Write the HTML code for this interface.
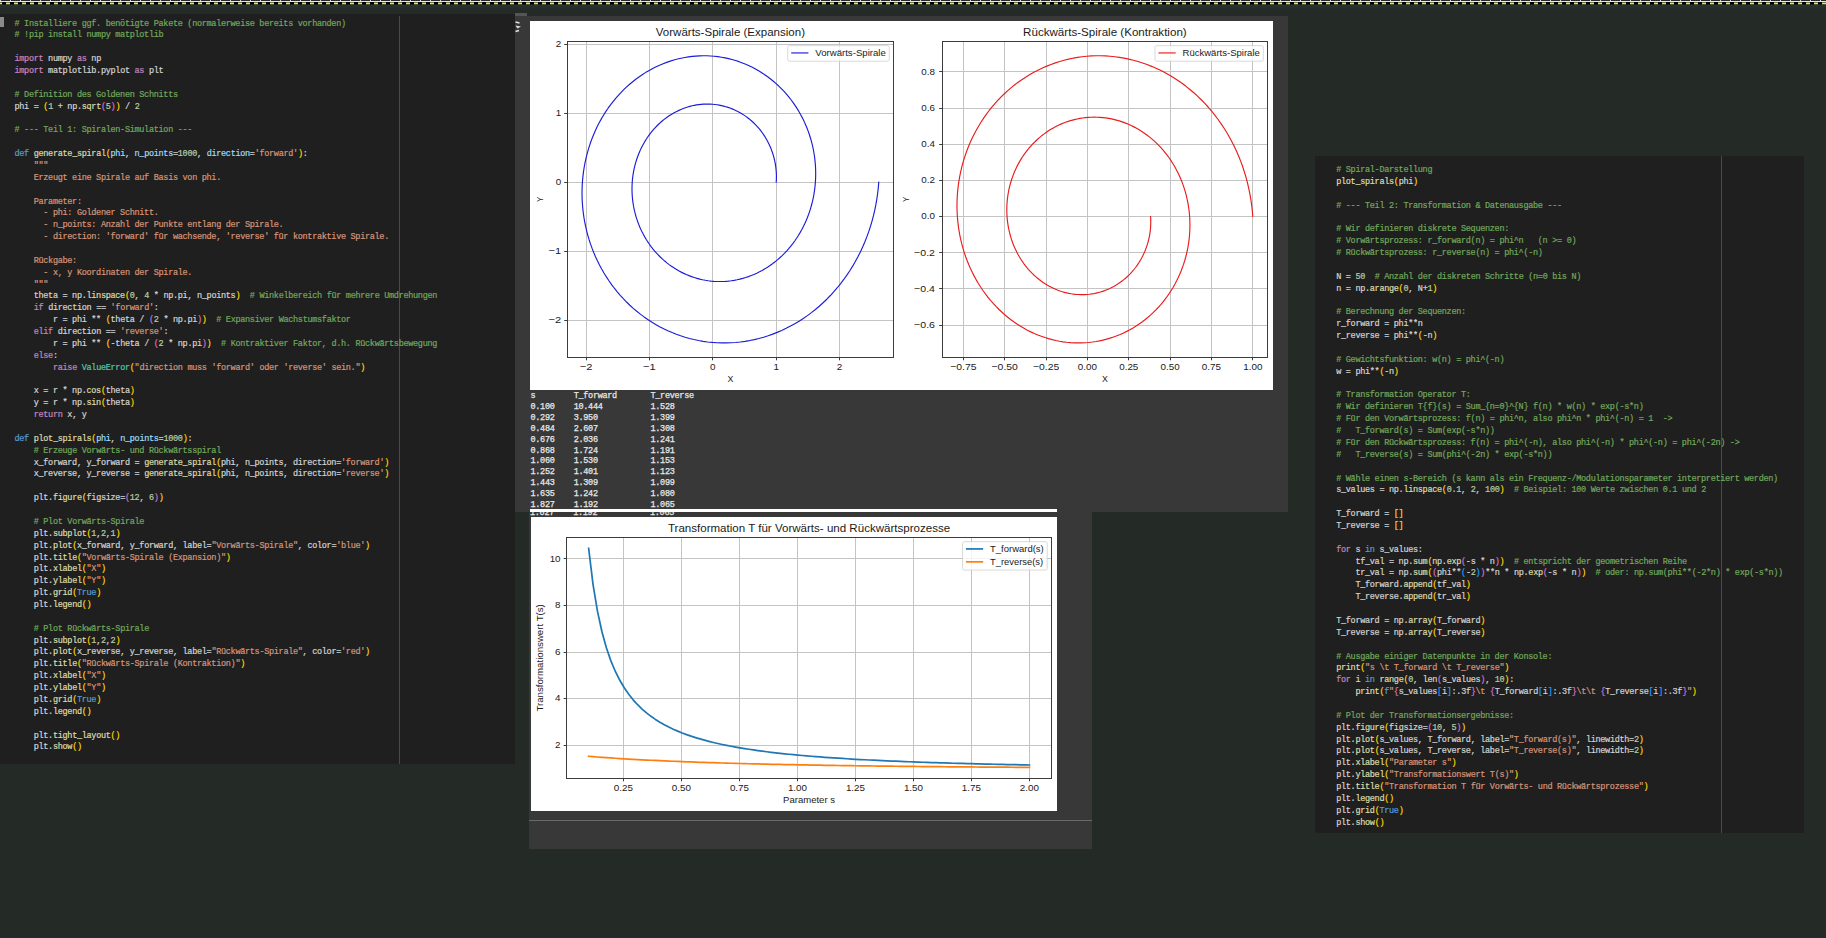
<!DOCTYPE html>
<html><head><meta charset="utf-8"><title>notebook</title><style>
*{margin:0;padding:0;box-sizing:border-box}
html,body{width:1826px;height:938px;overflow:hidden;background:#242a26}
body{position:relative;font-family:"Liberation Sans",sans-serif}
.abs{position:absolute}
.cl{position:absolute;white-space:pre;font:8.5px/12px "Liberation Mono",monospace;letter-spacing:-0.3px;color:#d4d4d4;-webkit-text-stroke:0.2px}
.tb{position:absolute;left:530.5px;white-space:pre;font:8.5px/11px "Liberation Mono",monospace;letter-spacing:-0.3px;color:#e8e8e8;-webkit-text-stroke:0.25px}
</style></head>
<body>
<svg class="abs" style="left:0;top:0" width="1826" height="6">
<defs>
<pattern id="pw" width="10" height="1" patternUnits="userSpaceOnUse"><rect width="10" height="1" fill="#2a2a30"/><rect x="0" width="1" height="1" fill="#d8d8d8"/></pattern>
<pattern id="py" width="8" height="2" patternUnits="userSpaceOnUse"><rect width="8" height="2" fill="#000"/><rect x="0" width="2" height="2" fill="#d2e676"/><rect x="6" width="2" height="2" fill="#d2e676"/></pattern>
</defs>
<rect x="0" y="0" width="1826" height="1" fill="url(#pw)"/>
<rect x="0" y="1" width="1826" height="1" fill="#e8e8e8"/>
<rect x="0" y="2" width="1826" height="1" fill="#0a0a0a"/>
<rect x="0" y="2.5" width="1826" height="2" fill="url(#py)"/>
<rect x="0" y="4.5" width="1826" height="1.5" fill="#1e2419"/>
</svg>
<div class="abs" style="left:0;top:5px;width:1826px;height:6px;background:linear-gradient(#2b3031 0px,#272c2c 3px,#242a26 6px)"></div>
<div class="abs" style="left:0;top:14px;width:515px;height:750px;background:#1f1f1f"></div>
<div class="abs" style="left:399px;top:16px;width:1px;height:748px;background:#4a4a4a"></div>
<div class="abs" style="left:0;top:17px;width:4px;height:10px;background:#8a8a8a"></div>
<div class="cl" style="left:14.5px;top:17.50px"><span style="color:#72a85c"># Installiere ggf. benötigte Pakete (normalerweise bereits vorhanden)</span></div>
<div class="cl" style="left:14.5px;top:29.37px"><span style="color:#72a85c"># !pip install numpy matplotlib</span></div>
<div class="cl" style="left:14.5px;top:53.10px"><span style="color:#c586c0">import</span> numpy <span style="color:#c586c0">as</span> np</div>
<div class="cl" style="left:14.5px;top:64.97px"><span style="color:#c586c0">import</span> matplotlib.pyplot <span style="color:#c586c0">as</span> plt</div>
<div class="cl" style="left:14.5px;top:88.70px"><span style="color:#72a85c"># Definition des Goldenen Schnitts</span></div>
<div class="cl" style="left:14.5px;top:100.57px">phi = <span style="color:#ffd700">(</span><span style="color:#b5cea8">1</span> + np.<span style="color:#dcdcaa">sqrt</span><span style="color:#da70d6">(</span><span style="color:#b5cea8">5</span><span style="color:#da70d6">)</span><span style="color:#ffd700">)</span> / <span style="color:#b5cea8">2</span></div>
<div class="cl" style="left:14.5px;top:124.30px"><span style="color:#72a85c"># --- Teil 1: Spiralen-Simulation ---</span></div>
<div class="cl" style="left:14.5px;top:148.04px"><span style="color:#569cd6">def</span> <span style="color:#dcdcaa">generate_spiral</span><span style="color:#ffd700">(</span><span style="color:#9cdcfe">phi</span>, <span style="color:#9cdcfe">n_points</span>=<span style="color:#b5cea8">1000</span>, <span style="color:#9cdcfe">direction</span>=<span style="color:#d6957a">'forward'</span><span style="color:#ffd700">)</span>:</div>
<div class="cl" style="left:14.5px;top:159.90px">    <span style="color:#d6957a">"""</span></div>
<div class="cl" style="left:14.5px;top:171.77px"><span style="color:#d6957a">    Erzeugt eine Spirale auf Basis von phi.</span></div>
<div class="cl" style="left:14.5px;top:195.51px"><span style="color:#d6957a">    Parameter:</span></div>
<div class="cl" style="left:14.5px;top:207.37px"><span style="color:#d6957a">      - phi: Goldener Schnitt.</span></div>
<div class="cl" style="left:14.5px;top:219.24px"><span style="color:#d6957a">      - n_points: Anzahl der Punkte entlang der Spirale.</span></div>
<div class="cl" style="left:14.5px;top:231.11px"><span style="color:#d6957a">      - direction: 'forward' für wachsende, 'reverse' für kontraktive Spirale.</span></div>
<div class="cl" style="left:14.5px;top:254.84px"><span style="color:#d6957a">    Rückgabe:</span></div>
<div class="cl" style="left:14.5px;top:266.71px"><span style="color:#d6957a">      - x, y Koordinaten der Spirale.</span></div>
<div class="cl" style="left:14.5px;top:278.57px"><span style="color:#d6957a">    """</span></div>
<div class="cl" style="left:14.5px;top:290.44px">    theta = np.<span style="color:#dcdcaa">linspace</span><span style="color:#ffd700">(</span><span style="color:#b5cea8">0</span>, <span style="color:#b5cea8">4</span> * np.pi, n_points<span style="color:#ffd700">)</span>  <span style="color:#72a85c"># Winkelbereich für mehrere Umdrehungen</span></div>
<div class="cl" style="left:14.5px;top:302.31px">    <span style="color:#c586c0">if</span> direction == <span style="color:#d6957a">'forward'</span>:</div>
<div class="cl" style="left:14.5px;top:314.18px">        r = phi ** <span style="color:#ffd700">(</span>theta / <span style="color:#da70d6">(</span><span style="color:#b5cea8">2</span> * np.pi<span style="color:#da70d6">)</span><span style="color:#ffd700">)</span>  <span style="color:#72a85c"># Expansiver Wachstumsfaktor</span></div>
<div class="cl" style="left:14.5px;top:326.04px">    <span style="color:#c586c0">elif</span> direction == <span style="color:#d6957a">'reverse'</span>:</div>
<div class="cl" style="left:14.5px;top:337.91px">        r = phi ** <span style="color:#ffd700">(</span>-theta / <span style="color:#da70d6">(</span><span style="color:#b5cea8">2</span> * np.pi<span style="color:#da70d6">)</span><span style="color:#ffd700">)</span>  <span style="color:#72a85c"># Kontraktiver Faktor, d.h. Rückwärtsbewegung</span></div>
<div class="cl" style="left:14.5px;top:349.78px">    <span style="color:#c586c0">else</span>:</div>
<div class="cl" style="left:14.5px;top:361.64px">        <span style="color:#c586c0">raise</span> <span style="color:#4ec9b0">ValueError</span><span style="color:#ffd700">(</span><span style="color:#d6957a">"direction muss 'forward' oder 'reverse' sein."</span><span style="color:#ffd700">)</span></div>
<div class="cl" style="left:14.5px;top:385.38px">    x = r * np.<span style="color:#dcdcaa">cos</span><span style="color:#ffd700">(</span>theta<span style="color:#ffd700">)</span></div>
<div class="cl" style="left:14.5px;top:397.24px">    y = r * np.<span style="color:#dcdcaa">sin</span><span style="color:#ffd700">(</span>theta<span style="color:#ffd700">)</span></div>
<div class="cl" style="left:14.5px;top:409.11px">    <span style="color:#c586c0">return</span> x, y</div>
<div class="cl" style="left:14.5px;top:432.85px"><span style="color:#569cd6">def</span> <span style="color:#dcdcaa">plot_spirals</span><span style="color:#ffd700">(</span><span style="color:#9cdcfe">phi</span>, <span style="color:#9cdcfe">n_points</span>=<span style="color:#b5cea8">1000</span><span style="color:#ffd700">)</span>:</div>
<div class="cl" style="left:14.5px;top:444.71px">    <span style="color:#72a85c"># Erzeuge Vorwärts- und Rückwärtsspiral</span></div>
<div class="cl" style="left:14.5px;top:456.58px">    x_forward, y_forward = <span style="color:#dcdcaa">generate_spiral</span><span style="color:#ffd700">(</span>phi, n_points, direction=<span style="color:#d6957a">'forward'</span><span style="color:#ffd700">)</span></div>
<div class="cl" style="left:14.5px;top:468.45px">    x_reverse, y_reverse = <span style="color:#dcdcaa">generate_spiral</span><span style="color:#ffd700">(</span>phi, n_points, direction=<span style="color:#d6957a">'reverse'</span><span style="color:#ffd700">)</span></div>
<div class="cl" style="left:14.5px;top:492.18px">    plt.<span style="color:#dcdcaa">figure</span><span style="color:#ffd700">(</span>figsize=<span style="color:#da70d6">(</span><span style="color:#b5cea8">12</span>, <span style="color:#b5cea8">6</span><span style="color:#da70d6">)</span><span style="color:#ffd700">)</span></div>
<div class="cl" style="left:14.5px;top:515.91px">    <span style="color:#72a85c"># Plot Vorwärts-Spirale</span></div>
<div class="cl" style="left:14.5px;top:527.78px">    plt.<span style="color:#dcdcaa">subplot</span><span style="color:#ffd700">(</span><span style="color:#b5cea8">1</span>,<span style="color:#b5cea8">2</span>,<span style="color:#b5cea8">1</span><span style="color:#ffd700">)</span></div>
<div class="cl" style="left:14.5px;top:539.65px">    plt.<span style="color:#dcdcaa">plot</span><span style="color:#ffd700">(</span>x_forward, y_forward, label=<span style="color:#d6957a">"Vorwärts-Spirale"</span>, color=<span style="color:#d6957a">'blue'</span><span style="color:#ffd700">)</span></div>
<div class="cl" style="left:14.5px;top:551.51px">    plt.<span style="color:#dcdcaa">title</span><span style="color:#ffd700">(</span><span style="color:#d6957a">"Vorwärts-Spirale (Expansion)"</span><span style="color:#ffd700">)</span></div>
<div class="cl" style="left:14.5px;top:563.38px">    plt.<span style="color:#dcdcaa">xlabel</span><span style="color:#ffd700">(</span><span style="color:#d6957a">"X"</span><span style="color:#ffd700">)</span></div>
<div class="cl" style="left:14.5px;top:575.25px">    plt.<span style="color:#dcdcaa">ylabel</span><span style="color:#ffd700">(</span><span style="color:#d6957a">"Y"</span><span style="color:#ffd700">)</span></div>
<div class="cl" style="left:14.5px;top:587.12px">    plt.<span style="color:#dcdcaa">grid</span><span style="color:#ffd700">(</span><span style="color:#569cd6">True</span><span style="color:#ffd700">)</span></div>
<div class="cl" style="left:14.5px;top:598.98px">    plt.<span style="color:#dcdcaa">legend</span><span style="color:#ffd700">()</span></div>
<div class="cl" style="left:14.5px;top:622.72px">    <span style="color:#72a85c"># Plot Rückwärts-Spirale</span></div>
<div class="cl" style="left:14.5px;top:634.58px">    plt.<span style="color:#dcdcaa">subplot</span><span style="color:#ffd700">(</span><span style="color:#b5cea8">1</span>,<span style="color:#b5cea8">2</span>,<span style="color:#b5cea8">2</span><span style="color:#ffd700">)</span></div>
<div class="cl" style="left:14.5px;top:646.45px">    plt.<span style="color:#dcdcaa">plot</span><span style="color:#ffd700">(</span>x_reverse, y_reverse, label=<span style="color:#d6957a">"Rückwärts-Spirale"</span>, color=<span style="color:#d6957a">'red'</span><span style="color:#ffd700">)</span></div>
<div class="cl" style="left:14.5px;top:658.32px">    plt.<span style="color:#dcdcaa">title</span><span style="color:#ffd700">(</span><span style="color:#d6957a">"Rückwärts-Spirale (Kontraktion)"</span><span style="color:#ffd700">)</span></div>
<div class="cl" style="left:14.5px;top:670.19px">    plt.<span style="color:#dcdcaa">xlabel</span><span style="color:#ffd700">(</span><span style="color:#d6957a">"X"</span><span style="color:#ffd700">)</span></div>
<div class="cl" style="left:14.5px;top:682.05px">    plt.<span style="color:#dcdcaa">ylabel</span><span style="color:#ffd700">(</span><span style="color:#d6957a">"Y"</span><span style="color:#ffd700">)</span></div>
<div class="cl" style="left:14.5px;top:693.92px">    plt.<span style="color:#dcdcaa">grid</span><span style="color:#ffd700">(</span><span style="color:#569cd6">True</span><span style="color:#ffd700">)</span></div>
<div class="cl" style="left:14.5px;top:705.79px">    plt.<span style="color:#dcdcaa">legend</span><span style="color:#ffd700">()</span></div>
<div class="cl" style="left:14.5px;top:729.52px">    plt.<span style="color:#dcdcaa">tight_layout</span><span style="color:#ffd700">()</span></div>
<div class="cl" style="left:14.5px;top:741.39px">    plt.<span style="color:#dcdcaa">show</span><span style="color:#ffd700">()</span></div>

<div class="abs" style="left:515px;top:16px;width:773px;height:496px;background:#383838"></div>
<div class="abs" style="left:515px;top:13px;width:12px;height:3px;background:#555"></div>
<svg class="abs" style="left:514px;top:20px" width="10" height="14"><path d="M1.5 2 L5.5 3" stroke="#e0e0e0" stroke-width="1.6" fill="none"/><path d="M1.5 5.5 L7 6.5 L3.5 8.5 Z" fill="#e0e0e0"/><path d="M1.5 11.5 L5 10.5" stroke="#e0e0e0" stroke-width="1.6" fill="none"/></svg>
<svg style="position:absolute;left:530px;top:21px" width="743" height="369" viewBox="530 21 743 369" font-family='"Liberation Sans", sans-serif'><rect x="530" y="21" width="743" height="369" fill="#fff"/><line x1="586.50" y1="41.40" x2="586.50" y2="357.30" stroke="#c4c4c4" stroke-width="1"/>
<line x1="649.50" y1="41.40" x2="649.50" y2="357.30" stroke="#c4c4c4" stroke-width="1"/>
<line x1="712.50" y1="41.40" x2="712.50" y2="357.30" stroke="#c4c4c4" stroke-width="1"/>
<line x1="776.50" y1="41.40" x2="776.50" y2="357.30" stroke="#c4c4c4" stroke-width="1"/>
<line x1="839.50" y1="41.40" x2="839.50" y2="357.30" stroke="#c4c4c4" stroke-width="1"/>
<line x1="567.20" y1="320.50" x2="893.60" y2="320.50" stroke="#c4c4c4" stroke-width="1"/>
<line x1="567.20" y1="251.50" x2="893.60" y2="251.50" stroke="#c4c4c4" stroke-width="1"/>
<line x1="567.20" y1="182.50" x2="893.60" y2="182.50" stroke="#c4c4c4" stroke-width="1"/>
<line x1="567.20" y1="113.50" x2="893.60" y2="113.50" stroke="#c4c4c4" stroke-width="1"/>
<line x1="567.20" y1="44.50" x2="893.60" y2="44.50" stroke="#c4c4c4" stroke-width="1"/>
<path d="M776.22,182.16 L776.34,179.98 L776.40,177.80 L776.40,175.60 L776.33,173.40 L776.20,171.20 L776.00,169.00 L775.74,166.80 L775.42,164.61 L775.03,162.42 L774.58,160.25 L774.06,158.08 L773.48,155.93 L772.84,153.79 L772.13,151.68 L771.36,149.58 L770.53,147.50 L769.63,145.45 L768.68,143.43 L767.67,141.43 L766.59,139.47 L765.46,137.54 L764.27,135.64 L763.02,133.79 L761.71,131.97 L760.35,130.19 L758.94,128.46 L757.47,126.77 L755.95,125.13 L754.38,123.53 L752.76,121.99 L751.10,120.50 L749.38,119.07 L747.63,117.69 L745.83,116.37 L743.98,115.11 L742.10,113.91 L740.18,112.77 L738.22,111.70 L736.23,110.69 L734.21,109.75 L732.15,108.88 L730.06,108.07 L727.95,107.34 L725.81,106.68 L723.65,106.08 L721.47,105.57 L719.27,105.12 L717.05,104.76 L714.81,104.46 L712.57,104.25 L710.31,104.11 L708.04,104.04 L705.77,104.06 L703.50,104.15 L701.22,104.32 L698.94,104.58 L696.67,104.91 L694.40,105.31 L692.14,105.80 L689.89,106.37 L687.65,107.01 L685.42,107.73 L683.21,108.53 L681.02,109.41 L678.85,110.37 L676.71,111.40 L674.59,112.51 L672.50,113.69 L670.44,114.95 L668.41,116.28 L666.42,117.68 L664.46,119.15 L662.54,120.70 L660.67,122.31 L658.83,123.99 L657.04,125.74 L655.30,127.55 L653.61,129.42 L651.97,131.36 L650.38,133.36 L648.85,135.41 L647.37,137.52 L645.95,139.69 L644.59,141.91 L643.30,144.18 L642.06,146.50 L640.89,148.87 L639.79,151.28 L638.76,153.73 L637.79,156.23 L636.90,158.76 L636.07,161.33 L635.32,163.93 L634.64,166.56 L634.04,169.22 L633.52,171.91 L633.07,174.61 L632.70,177.34 L632.40,180.09 L632.19,182.86 L632.05,185.63 L632.00,188.42 L632.02,191.21 L632.13,194.01 L632.32,196.81 L632.59,199.61 L632.94,202.40 L633.37,205.19 L633.89,207.97 L634.48,210.73 L635.16,213.48 L635.92,216.22 L636.76,218.93 L637.68,221.62 L638.68,224.28 L639.75,226.91 L640.91,229.51 L642.14,232.08 L643.45,234.60 L644.84,237.09 L646.30,239.54 L647.83,241.94 L649.44,244.29 L651.12,246.59 L652.86,248.83 L654.68,251.03 L656.56,253.16 L658.51,255.23 L660.52,257.24 L662.60,259.18 L664.73,261.06 L666.93,262.87 L669.17,264.60 L671.48,266.26 L673.84,267.85 L676.24,269.35 L678.70,270.78 L681.20,272.12 L683.74,273.38 L686.33,274.56 L688.96,275.65 L691.62,276.65 L694.31,277.56 L697.04,278.38 L699.80,279.11 L702.58,279.75 L705.39,280.29 L708.21,280.73 L711.06,281.08 L713.92,281.33 L716.80,281.48 L719.68,281.54 L722.57,281.49 L725.47,281.35 L728.37,281.11 L731.26,280.76 L734.15,280.32 L737.04,279.77 L739.91,279.13 L742.77,278.38 L745.61,277.54 L748.44,276.60 L751.24,275.55 L754.02,274.41 L756.77,273.17 L759.49,271.83 L762.18,270.40 L764.83,268.87 L767.44,267.25 L770.01,265.54 L772.53,263.73 L775.01,261.83 L777.44,259.85 L779.81,257.78 L782.13,255.62 L784.39,253.37 L786.59,251.05 L788.73,248.64 L790.80,246.16 L792.80,243.60 L794.73,240.97 L796.59,238.27 L798.38,235.49 L800.09,232.65 L801.72,229.75 L803.27,226.78 L804.73,223.76 L806.11,220.68 L807.41,217.54 L808.61,214.36 L809.73,211.12 L810.75,207.85 L811.69,204.53 L812.52,201.17 L813.27,197.78 L813.91,194.35 L814.46,190.90 L814.90,187.42 L815.25,183.92 L815.50,180.40 L815.65,176.87 L815.69,173.32 L815.63,169.77 L815.47,166.21 L815.20,162.65 L814.83,159.09 L814.36,155.53 L813.79,151.99 L813.10,148.46 L812.32,144.95 L811.43,141.45 L810.44,137.98 L809.35,134.54 L808.16,131.13 L806.86,127.76 L805.47,124.42 L803.97,121.12 L802.38,117.87 L800.69,114.66 L798.90,111.51 L797.02,108.42 L795.04,105.38 L792.98,102.41 L790.82,99.50 L788.58,96.66 L786.25,93.89 L783.83,91.19 L781.33,88.58 L778.75,86.04 L776.09,83.59 L773.36,81.22 L770.55,78.95 L767.67,76.77 L764.73,74.68 L761.71,72.69 L758.63,70.80 L755.50,69.01 L752.30,67.32 L749.05,65.75 L745.75,64.28 L742.40,62.92 L739.00,61.67 L735.56,60.54 L732.08,59.53 L728.57,58.63 L725.02,57.85 L721.44,57.20 L717.84,56.66 L714.21,56.25 L710.57,55.96 L706.91,55.80 L703.24,55.76 L699.56,55.85 L695.87,56.06 L692.19,56.40 L688.51,56.87 L684.83,57.47 L681.16,58.20 L677.51,59.05 L673.88,60.03 L670.27,61.13 L666.68,62.37 L663.12,63.72 L659.60,65.21 L656.11,66.82 L652.66,68.55 L649.25,70.40 L645.89,72.37 L642.58,74.47 L639.33,76.68 L636.13,79.00 L633.00,81.44 L629.93,84.00 L626.92,86.66 L623.99,89.43 L621.14,92.31 L618.36,95.30 L615.66,98.38 L613.05,101.56 L610.52,104.84 L608.09,108.21 L605.74,111.67 L603.50,115.22 L601.35,118.86 L599.30,122.57 L597.36,126.36 L595.52,130.23 L593.79,134.17 L592.17,138.17 L590.67,142.24 L589.27,146.36 L588.00,150.55 L586.85,154.78 L585.81,159.06 L584.90,163.39 L584.11,167.75 L583.44,172.15 L582.91,176.59 L582.49,181.05 L582.21,185.53 L582.06,190.03 L582.04,194.54 L582.14,199.07 L582.38,203.59 L582.75,208.12 L583.26,212.65 L583.89,217.17 L584.66,221.67 L585.56,226.15 L586.59,230.62 L587.75,235.05 L589.04,239.46 L590.46,243.83 L592.01,248.16 L593.69,252.44 L595.50,256.67 L597.43,260.85 L599.49,264.97 L601.67,269.03 L603.97,273.02 L606.40,276.94 L608.94,280.79 L611.59,284.55 L614.37,288.23 L617.25,291.82 L620.24,295.32 L623.34,298.72 L626.55,302.03 L629.85,305.23 L633.26,308.32 L636.76,311.30 L640.35,314.16 L644.04,316.91 L647.81,319.53 L651.66,322.03 L655.60,324.41 L659.61,326.65 L663.69,328.76 L667.84,330.73 L672.06,332.56 L676.34,334.26 L680.67,335.80 L685.06,337.21 L689.50,338.46 L693.98,339.56 L698.50,340.51 L703.06,341.31 L707.65,341.95 L712.27,342.44 L716.91,342.76 L721.57,342.93 L726.24,342.94 L730.92,342.79 L735.61,342.47 L740.30,342.00 L744.98,341.36 L749.65,340.56 L754.31,339.60 L758.95,338.47 L763.57,337.19 L768.15,335.74 L772.71,334.13 L777.23,332.36 L781.70,330.44 L786.13,328.35 L790.50,326.11 L794.82,323.72 L799.08,321.17 L803.27,318.47 L807.39,315.62 L811.44,312.62 L815.40,309.48 L819.29,306.20 L823.08,302.78 L826.79,299.22 L830.40,295.52 L833.91,291.69 L837.31,287.74 L840.61,283.66 L843.79,279.46 L846.86,275.14 L849.81,270.71 L852.64,266.17 L855.34,261.52 L857.91,256.77 L860.35,251.92 L862.66,246.98 L864.82,241.95 L866.84,236.84 L868.72,231.65 L870.45,226.38 L872.04,221.04 L873.47,215.64 L874.75,210.18 L875.87,204.66 L876.83,199.10 L877.64,193.49 L878.28,187.84 L878.76,182.16" fill="none" stroke="#1c1cd8" stroke-width="1.15" stroke-linejoin="round" stroke-linecap="square"/>
<rect x="567.50" y="41.50" width="326.00" height="316.00" fill="none" stroke="#3c3c3c" stroke-width="1"/>
<line x1="586.50" y1="357.30" x2="586.50" y2="360.30" stroke="#3c3c3c" stroke-width="1"/>
<text x="586.10" y="369.60" font-size="9.40" text-anchor="middle" textLength="12.68" lengthAdjust="spacingAndGlyphs" fill="#1a1a1a">−2</text>
<line x1="649.50" y1="357.30" x2="649.50" y2="360.30" stroke="#3c3c3c" stroke-width="1"/>
<text x="649.47" y="369.60" font-size="9.40" text-anchor="middle" textLength="12.68" lengthAdjust="spacingAndGlyphs" fill="#1a1a1a">−1</text>
<line x1="712.50" y1="357.30" x2="712.50" y2="360.30" stroke="#3c3c3c" stroke-width="1"/>
<text x="712.85" y="369.60" font-size="9.40" text-anchor="middle" textLength="5.47" lengthAdjust="spacingAndGlyphs" fill="#1a1a1a">0</text>
<line x1="776.50" y1="357.30" x2="776.50" y2="360.30" stroke="#3c3c3c" stroke-width="1"/>
<text x="776.22" y="369.60" font-size="9.40" text-anchor="middle" textLength="5.47" lengthAdjust="spacingAndGlyphs" fill="#1a1a1a">1</text>
<line x1="839.50" y1="357.30" x2="839.50" y2="360.30" stroke="#3c3c3c" stroke-width="1"/>
<text x="839.60" y="369.60" font-size="9.40" text-anchor="middle" textLength="5.47" lengthAdjust="spacingAndGlyphs" fill="#1a1a1a">2</text>
<line x1="564.20" y1="320.50" x2="567.20" y2="320.50" stroke="#3c3c3c" stroke-width="1"/>
<text x="561.20" y="323.10" font-size="9.40" text-anchor="end" textLength="12.68" lengthAdjust="spacingAndGlyphs" fill="#1a1a1a">−2</text>
<line x1="564.20" y1="251.50" x2="567.20" y2="251.50" stroke="#3c3c3c" stroke-width="1"/>
<text x="561.20" y="254.03" font-size="9.40" text-anchor="end" textLength="12.68" lengthAdjust="spacingAndGlyphs" fill="#1a1a1a">−1</text>
<line x1="564.20" y1="182.50" x2="567.20" y2="182.50" stroke="#3c3c3c" stroke-width="1"/>
<text x="561.20" y="184.96" font-size="9.40" text-anchor="end" textLength="5.47" lengthAdjust="spacingAndGlyphs" fill="#1a1a1a">0</text>
<line x1="564.20" y1="113.50" x2="567.20" y2="113.50" stroke="#3c3c3c" stroke-width="1"/>
<text x="561.20" y="115.90" font-size="9.40" text-anchor="end" textLength="5.47" lengthAdjust="spacingAndGlyphs" fill="#1a1a1a">1</text>
<line x1="564.20" y1="44.50" x2="567.20" y2="44.50" stroke="#3c3c3c" stroke-width="1"/>
<text x="561.20" y="46.83" font-size="9.40" text-anchor="end" textLength="5.47" lengthAdjust="spacingAndGlyphs" fill="#1a1a1a">2</text>
<text x="730.40" y="36.10" font-size="10.32" text-anchor="middle" textLength="149.20" lengthAdjust="spacingAndGlyphs" fill="#1a1a1a">Vorwärts-Spirale (Expansion)</text>
<text x="730.40" y="382.30" font-size="8.60" text-anchor="middle" textLength="5.89" lengthAdjust="spacingAndGlyphs" fill="#1a1a1a">X</text>
<text x="543.00" y="199.35" font-size="8.60" text-anchor="middle" textLength="5.25" lengthAdjust="spacingAndGlyphs" fill="#1a1a1a" transform="rotate(-90 543.00 199.35)">Y</text>
<rect x="787.74" y="45.70" width="101.56" height="15.48" rx="1.7" fill="#fff" fill-opacity="0.8" stroke="#cccccc" stroke-width="0.75"/>
<line x1="791.18" y1="52.94" x2="808.38" y2="52.94" stroke="#1c1cd8" stroke-width="1.15"/>
<text x="815.26" y="56.04" font-size="8.60" text-anchor="start" textLength="70.60" lengthAdjust="spacingAndGlyphs" fill="#1a1a1a">Vorwärts-Spirale</text><line x1="963.50" y1="41.40" x2="963.50" y2="357.30" stroke="#c4c4c4" stroke-width="1"/>
<line x1="1004.50" y1="41.40" x2="1004.50" y2="357.30" stroke="#c4c4c4" stroke-width="1"/>
<line x1="1046.50" y1="41.40" x2="1046.50" y2="357.30" stroke="#c4c4c4" stroke-width="1"/>
<line x1="1087.50" y1="41.40" x2="1087.50" y2="357.30" stroke="#c4c4c4" stroke-width="1"/>
<line x1="1128.50" y1="41.40" x2="1128.50" y2="357.30" stroke="#c4c4c4" stroke-width="1"/>
<line x1="1170.50" y1="41.40" x2="1170.50" y2="357.30" stroke="#c4c4c4" stroke-width="1"/>
<line x1="1211.50" y1="41.40" x2="1211.50" y2="357.30" stroke="#c4c4c4" stroke-width="1"/>
<line x1="1252.50" y1="41.40" x2="1252.50" y2="357.30" stroke="#c4c4c4" stroke-width="1"/>
<line x1="942.20" y1="325.50" x2="1267.60" y2="325.50" stroke="#c4c4c4" stroke-width="1"/>
<line x1="942.20" y1="288.50" x2="1267.60" y2="288.50" stroke="#c4c4c4" stroke-width="1"/>
<line x1="942.20" y1="252.50" x2="1267.60" y2="252.50" stroke="#c4c4c4" stroke-width="1"/>
<line x1="942.20" y1="216.50" x2="1267.60" y2="216.50" stroke="#c4c4c4" stroke-width="1"/>
<line x1="942.20" y1="180.50" x2="1267.60" y2="180.50" stroke="#c4c4c4" stroke-width="1"/>
<line x1="942.20" y1="144.50" x2="1267.60" y2="144.50" stroke="#c4c4c4" stroke-width="1"/>
<line x1="942.20" y1="108.50" x2="1267.60" y2="108.50" stroke="#c4c4c4" stroke-width="1"/>
<line x1="942.20" y1="71.50" x2="1267.60" y2="71.50" stroke="#c4c4c4" stroke-width="1"/>
<path d="M1252.81,216.54 L1252.33,210.86 L1251.69,205.21 L1250.88,199.60 L1249.92,194.04 L1248.80,188.52 L1247.53,183.06 L1246.10,177.66 L1244.53,172.32 L1242.80,167.05 L1240.93,161.86 L1238.91,156.75 L1236.75,151.72 L1234.45,146.78 L1232.02,141.93 L1229.46,137.18 L1226.77,132.53 L1223.95,127.99 L1221.01,123.56 L1217.95,119.24 L1214.77,115.04 L1211.48,110.96 L1208.09,107.01 L1204.59,103.18 L1200.99,99.48 L1197.30,95.92 L1193.52,92.50 L1189.64,89.22 L1185.69,86.08 L1181.65,83.08 L1177.54,80.23 L1173.37,77.53 L1169.12,74.98 L1164.82,72.59 L1160.46,70.35 L1156.04,68.26 L1151.58,66.34 L1147.08,64.57 L1142.54,62.96 L1137.97,61.51 L1133.36,60.23 L1128.74,59.10 L1124.09,58.14 L1119.44,57.34 L1114.77,56.70 L1110.10,56.23 L1105.42,55.91 L1100.75,55.76 L1096.10,55.77 L1091.45,55.94 L1086.82,56.26 L1082.22,56.75 L1077.64,57.39 L1073.10,58.19 L1068.59,59.14 L1064.12,60.24 L1059.70,61.49 L1055.32,62.90 L1051.00,64.44 L1046.74,66.14 L1042.53,67.97 L1038.39,69.94 L1034.32,72.05 L1030.32,74.29 L1026.40,76.67 L1022.56,79.17 L1018.80,81.79 L1015.13,84.54 L1011.55,87.40 L1008.05,90.38 L1004.66,93.47 L1001.36,96.67 L998.17,99.98 L995.08,103.38 L992.10,106.88 L989.22,110.47 L986.46,114.15 L983.81,117.91 L981.28,121.76 L978.86,125.68 L976.56,129.67 L974.39,133.73 L972.34,137.85 L970.41,142.03 L968.61,146.26 L966.94,150.54 L965.39,154.87 L963.97,159.24 L962.68,163.65 L961.53,168.08 L960.50,172.55 L959.60,177.03 L958.84,181.53 L958.21,186.05 L957.71,190.58 L957.34,195.11 L957.10,199.63 L956.99,204.16 L957.01,208.67 L957.17,213.17 L957.45,217.65 L957.86,222.11 L958.39,226.55 L959.06,230.95 L959.84,235.31 L960.75,239.64 L961.78,243.92 L962.94,248.15 L964.21,252.34 L965.59,256.46 L967.09,260.53 L968.71,264.53 L970.43,268.47 L972.26,272.34 L974.20,276.13 L976.24,279.84 L978.39,283.48 L980.63,287.03 L982.96,290.49 L985.39,293.86 L987.91,297.14 L990.51,300.32 L993.20,303.40 L995.97,306.39 L998.82,309.27 L1001.74,312.04 L1004.73,314.70 L1007.80,317.26 L1010.92,319.70 L1014.11,322.02 L1017.35,324.23 L1020.65,326.33 L1024.00,328.30 L1027.39,330.15 L1030.83,331.88 L1034.31,333.49 L1037.83,334.98 L1041.38,336.33 L1044.95,337.57 L1048.55,338.67 L1052.18,339.65 L1055.82,340.50 L1059.47,341.23 L1063.13,341.83 L1066.80,342.30 L1070.48,342.64 L1074.15,342.85 L1077.82,342.94 L1081.48,342.90 L1085.13,342.74 L1088.76,342.45 L1092.38,342.04 L1095.97,341.50 L1099.53,340.85 L1103.07,340.07 L1106.58,339.17 L1110.04,338.16 L1113.47,337.03 L1116.86,335.78 L1120.20,334.42 L1123.49,332.95 L1126.73,331.38 L1129.92,329.69 L1133.05,327.90 L1136.12,326.01 L1139.12,324.02 L1142.06,321.93 L1144.93,319.75 L1147.73,317.48 L1150.45,315.11 L1153.10,312.66 L1155.67,310.12 L1158.17,307.51 L1160.57,304.81 L1162.90,302.04 L1165.14,299.20 L1167.29,296.29 L1169.35,293.32 L1171.32,290.28 L1173.19,287.19 L1174.97,284.04 L1176.66,280.83 L1178.25,277.58 L1179.74,274.28 L1181.13,270.94 L1182.42,267.57 L1183.61,264.16 L1184.70,260.72 L1185.69,257.25 L1186.57,253.75 L1187.35,250.24 L1188.03,246.71 L1188.60,243.17 L1189.08,239.61 L1189.44,236.05 L1189.71,232.49 L1189.87,228.93 L1189.93,225.38 L1189.88,221.83 L1189.74,218.30 L1189.49,214.78 L1189.15,211.28 L1188.70,207.80 L1188.15,204.35 L1187.51,200.92 L1186.77,197.53 L1185.94,194.17 L1185.01,190.85 L1183.99,187.58 L1182.87,184.34 L1181.67,181.16 L1180.38,178.02 L1179.00,174.94 L1177.54,171.92 L1176.00,168.95 L1174.37,166.05 L1172.67,163.21 L1170.89,160.43 L1169.04,157.73 L1167.11,155.10 L1165.11,152.54 L1163.05,150.06 L1160.92,147.65 L1158.72,145.33 L1156.47,143.08 L1154.16,140.92 L1151.79,138.85 L1149.37,136.87 L1146.90,134.97 L1144.39,133.16 L1141.83,131.45 L1139.22,129.83 L1136.58,128.30 L1133.90,126.87 L1131.19,125.53 L1128.45,124.29 L1125.68,123.15 L1122.88,122.10 L1120.07,121.16 L1117.23,120.32 L1114.38,119.57 L1111.52,118.93 L1108.64,118.38 L1105.76,117.94 L1102.87,117.59 L1099.98,117.35 L1097.10,117.21 L1094.21,117.16 L1091.34,117.22 L1088.47,117.37 L1085.62,117.62 L1082.78,117.97 L1079.96,118.41 L1077.17,118.95 L1074.39,119.59 L1071.64,120.32 L1068.92,121.14 L1066.24,122.05 L1063.58,123.05 L1060.96,124.14 L1058.39,125.32 L1055.85,126.58 L1053.36,127.92 L1050.91,129.35 L1048.51,130.85 L1046.16,132.44 L1043.86,134.10 L1041.62,135.83 L1039.43,137.64 L1037.31,139.52 L1035.24,141.46 L1033.23,143.47 L1031.29,145.54 L1029.41,147.67 L1027.60,149.87 L1025.86,152.11 L1024.19,154.41 L1022.59,156.76 L1021.06,159.16 L1019.60,161.61 L1018.22,164.10 L1016.91,166.62 L1015.68,169.19 L1014.53,171.79 L1013.46,174.42 L1012.46,177.08 L1011.55,179.77 L1010.71,182.48 L1009.95,185.22 L1009.28,187.97 L1008.68,190.73 L1008.17,193.51 L1007.74,196.30 L1007.39,199.09 L1007.12,201.89 L1006.93,204.69 L1006.83,207.49 L1006.80,210.28 L1006.85,213.07 L1006.99,215.84 L1007.20,218.61 L1007.49,221.36 L1007.87,224.09 L1008.31,226.79 L1008.84,229.48 L1009.44,232.14 L1010.11,234.77 L1010.86,237.37 L1011.68,239.94 L1012.57,242.47 L1013.54,244.97 L1014.57,247.42 L1015.67,249.83 L1016.83,252.20 L1018.06,254.52 L1019.36,256.79 L1020.71,259.01 L1022.12,261.18 L1023.60,263.29 L1025.13,265.34 L1026.71,267.34 L1028.35,269.28 L1030.03,271.15 L1031.77,272.96 L1033.55,274.71 L1035.38,276.39 L1037.25,278.00 L1039.16,279.55 L1041.11,281.02 L1043.10,282.42 L1045.12,283.75 L1047.18,285.01 L1049.26,286.19 L1051.37,287.30 L1053.51,288.33 L1055.67,289.29 L1057.86,290.17 L1060.06,290.97 L1062.28,291.69 L1064.51,292.33 L1066.75,292.90 L1069.01,293.39 L1071.27,293.79 L1073.54,294.12 L1075.81,294.38 L1078.08,294.55 L1080.35,294.64 L1082.61,294.66 L1084.87,294.59 L1087.12,294.45 L1089.36,294.24 L1091.59,293.94 L1093.80,293.58 L1096.00,293.13 L1098.17,292.62 L1100.33,292.02 L1102.46,291.36 L1104.56,290.63 L1106.64,289.82 L1108.69,288.95 L1110.71,288.01 L1112.70,287.00 L1114.65,285.93 L1116.57,284.79 L1118.44,283.59 L1120.28,282.33 L1122.07,281.01 L1123.83,279.63 L1125.53,278.20 L1127.19,276.71 L1128.81,275.17 L1130.37,273.57 L1131.89,271.93 L1133.35,270.24 L1134.76,268.51 L1136.12,266.73 L1137.42,264.91 L1138.66,263.06 L1139.85,261.16 L1140.98,259.23 L1142.05,257.27 L1143.06,255.27 L1144.01,253.25 L1144.91,251.20 L1145.73,249.12 L1146.50,247.02 L1147.21,244.91 L1147.85,242.77 L1148.43,240.62 L1148.94,238.45 L1149.39,236.28 L1149.78,234.09 L1150.10,231.90 L1150.36,229.70 L1150.56,227.50 L1150.69,225.30 L1150.76,223.10 L1150.76,220.90 L1150.70,218.72 L1150.58,216.54" fill="none" stroke="#e81c1c" stroke-width="1.15" stroke-linejoin="round" stroke-linecap="square"/>
<rect x="942.50" y="41.50" width="325.00" height="316.00" fill="none" stroke="#3c3c3c" stroke-width="1"/>
<line x1="963.50" y1="357.30" x2="963.50" y2="360.30" stroke="#3c3c3c" stroke-width="1"/>
<text x="963.35" y="369.60" font-size="9.40" text-anchor="middle" textLength="26.35" lengthAdjust="spacingAndGlyphs" fill="#1a1a1a">−0.75</text>
<line x1="1004.50" y1="357.30" x2="1004.50" y2="360.30" stroke="#3c3c3c" stroke-width="1"/>
<text x="1004.70" y="369.60" font-size="9.40" text-anchor="middle" textLength="26.35" lengthAdjust="spacingAndGlyphs" fill="#1a1a1a">−0.50</text>
<line x1="1046.50" y1="357.30" x2="1046.50" y2="360.30" stroke="#3c3c3c" stroke-width="1"/>
<text x="1046.05" y="369.60" font-size="9.40" text-anchor="middle" textLength="26.35" lengthAdjust="spacingAndGlyphs" fill="#1a1a1a">−0.25</text>
<line x1="1087.50" y1="357.30" x2="1087.50" y2="360.30" stroke="#3c3c3c" stroke-width="1"/>
<text x="1087.40" y="369.60" font-size="9.40" text-anchor="middle" textLength="19.15" lengthAdjust="spacingAndGlyphs" fill="#1a1a1a">0.00</text>
<line x1="1128.50" y1="357.30" x2="1128.50" y2="360.30" stroke="#3c3c3c" stroke-width="1"/>
<text x="1128.75" y="369.60" font-size="9.40" text-anchor="middle" textLength="19.15" lengthAdjust="spacingAndGlyphs" fill="#1a1a1a">0.25</text>
<line x1="1170.50" y1="357.30" x2="1170.50" y2="360.30" stroke="#3c3c3c" stroke-width="1"/>
<text x="1170.11" y="369.60" font-size="9.40" text-anchor="middle" textLength="19.15" lengthAdjust="spacingAndGlyphs" fill="#1a1a1a">0.50</text>
<line x1="1211.50" y1="357.30" x2="1211.50" y2="360.30" stroke="#3c3c3c" stroke-width="1"/>
<text x="1211.46" y="369.60" font-size="9.40" text-anchor="middle" textLength="19.15" lengthAdjust="spacingAndGlyphs" fill="#1a1a1a">0.75</text>
<line x1="1252.50" y1="357.30" x2="1252.50" y2="360.30" stroke="#3c3c3c" stroke-width="1"/>
<text x="1252.81" y="369.60" font-size="9.40" text-anchor="middle" textLength="19.15" lengthAdjust="spacingAndGlyphs" fill="#1a1a1a">1.00</text>
<line x1="939.20" y1="325.50" x2="942.20" y2="325.50" stroke="#3c3c3c" stroke-width="1"/>
<text x="935.00" y="327.83" font-size="9.40" text-anchor="end" textLength="20.88" lengthAdjust="spacingAndGlyphs" fill="#1a1a1a">−0.6</text>
<line x1="939.20" y1="288.50" x2="942.20" y2="288.50" stroke="#3c3c3c" stroke-width="1"/>
<text x="935.00" y="291.66" font-size="9.40" text-anchor="end" textLength="20.88" lengthAdjust="spacingAndGlyphs" fill="#1a1a1a">−0.4</text>
<line x1="939.20" y1="252.50" x2="942.20" y2="252.50" stroke="#3c3c3c" stroke-width="1"/>
<text x="935.00" y="255.50" font-size="9.40" text-anchor="end" textLength="20.88" lengthAdjust="spacingAndGlyphs" fill="#1a1a1a">−0.2</text>
<line x1="939.20" y1="216.50" x2="942.20" y2="216.50" stroke="#3c3c3c" stroke-width="1"/>
<text x="935.00" y="219.34" font-size="9.40" text-anchor="end" textLength="13.68" lengthAdjust="spacingAndGlyphs" fill="#1a1a1a">0.0</text>
<line x1="939.20" y1="180.50" x2="942.20" y2="180.50" stroke="#3c3c3c" stroke-width="1"/>
<text x="935.00" y="183.17" font-size="9.40" text-anchor="end" textLength="13.68" lengthAdjust="spacingAndGlyphs" fill="#1a1a1a">0.2</text>
<line x1="939.20" y1="144.50" x2="942.20" y2="144.50" stroke="#3c3c3c" stroke-width="1"/>
<text x="935.00" y="147.01" font-size="9.40" text-anchor="end" textLength="13.68" lengthAdjust="spacingAndGlyphs" fill="#1a1a1a">0.4</text>
<line x1="939.20" y1="108.50" x2="942.20" y2="108.50" stroke="#3c3c3c" stroke-width="1"/>
<text x="935.00" y="110.85" font-size="9.40" text-anchor="end" textLength="13.68" lengthAdjust="spacingAndGlyphs" fill="#1a1a1a">0.6</text>
<line x1="939.20" y1="71.50" x2="942.20" y2="71.50" stroke="#3c3c3c" stroke-width="1"/>
<text x="935.00" y="74.68" font-size="9.40" text-anchor="end" textLength="13.68" lengthAdjust="spacingAndGlyphs" fill="#1a1a1a">0.8</text>
<text x="1104.90" y="36.10" font-size="10.32" text-anchor="middle" textLength="163.60" lengthAdjust="spacingAndGlyphs" fill="#1a1a1a">Rückwärts-Spirale (Kontraktion)</text>
<text x="1104.90" y="382.30" font-size="8.60" text-anchor="middle" textLength="5.89" lengthAdjust="spacingAndGlyphs" fill="#1a1a1a">X</text>
<text x="909.00" y="199.35" font-size="8.60" text-anchor="middle" textLength="5.25" lengthAdjust="spacingAndGlyphs" fill="#1a1a1a" transform="rotate(-90 909.00 199.35)">Y</text>
<rect x="1155.00" y="45.70" width="108.30" height="15.48" rx="1.7" fill="#fff" fill-opacity="0.8" stroke="#cccccc" stroke-width="0.75"/>
<line x1="1158.44" y1="52.94" x2="1175.64" y2="52.94" stroke="#e81c1c" stroke-width="1.15"/>
<text x="1182.52" y="56.04" font-size="8.60" text-anchor="start" textLength="77.34" lengthAdjust="spacingAndGlyphs" fill="#1a1a1a">Rückwärts-Spirale</text></svg>
<div class="tb" style="top:391.10px">s        T_forward       T_reverse</div>
<div class="tb" style="top:401.98px">0.100    10.444          1.528</div>
<div class="tb" style="top:412.86px">0.292    3.950           1.399</div>
<div class="tb" style="top:423.74px">0.484    2.607           1.308</div>
<div class="tb" style="top:434.62px">0.676    2.036           1.241</div>
<div class="tb" style="top:445.50px">0.868    1.724           1.191</div>
<div class="tb" style="top:456.38px">1.060    1.530           1.153</div>
<div class="tb" style="top:467.26px">1.252    1.401           1.123</div>
<div class="tb" style="top:478.14px">1.443    1.309           1.099</div>
<div class="tb" style="top:489.02px">1.635    1.242           1.080</div>
<div class="tb" style="top:499.90px">1.827    1.192           1.065</div>
<div class="abs" style="left:529px;top:512px;width:563px;height:337px;background:#383838"></div>
<div class="abs" style="left:530px;top:512px;width:527px;height:5px;overflow:hidden"><div class="tb" style="left:0;top:-4px">1.827    1.192           1.065</div></div>
<div class="abs" style="left:530px;top:509px;width:527px;height:3px;background:#fff"></div>
<svg style="position:absolute;left:531px;top:517px" width="526" height="294" viewBox="531 517 526 294" font-family='"Liberation Sans", sans-serif'><rect x="531" y="517" width="526" height="294" fill="#fff"/><line x1="623.50" y1="537.40" x2="623.50" y2="778.30" stroke="#c4c4c4" stroke-width="1"/>
<line x1="681.50" y1="537.40" x2="681.50" y2="778.30" stroke="#c4c4c4" stroke-width="1"/>
<line x1="739.50" y1="537.40" x2="739.50" y2="778.30" stroke="#c4c4c4" stroke-width="1"/>
<line x1="797.50" y1="537.40" x2="797.50" y2="778.30" stroke="#c4c4c4" stroke-width="1"/>
<line x1="855.50" y1="537.40" x2="855.50" y2="778.30" stroke="#c4c4c4" stroke-width="1"/>
<line x1="913.50" y1="537.40" x2="913.50" y2="778.30" stroke="#c4c4c4" stroke-width="1"/>
<line x1="971.50" y1="537.40" x2="971.50" y2="778.30" stroke="#c4c4c4" stroke-width="1"/>
<line x1="1029.50" y1="537.40" x2="1029.50" y2="778.30" stroke="#c4c4c4" stroke-width="1"/>
<line x1="566.60" y1="745.50" x2="1051.50" y2="745.50" stroke="#c4c4c4" stroke-width="1"/>
<line x1="566.60" y1="698.50" x2="1051.50" y2="698.50" stroke="#c4c4c4" stroke-width="1"/>
<line x1="566.60" y1="652.50" x2="1051.50" y2="652.50" stroke="#c4c4c4" stroke-width="1"/>
<line x1="566.60" y1="605.50" x2="1051.50" y2="605.50" stroke="#c4c4c4" stroke-width="1"/>
<line x1="566.60" y1="558.50" x2="1051.50" y2="558.50" stroke="#c4c4c4" stroke-width="1"/>
<path d="M588.64,548.35 L593.09,584.85 L597.55,611.63 L602.00,632.02 L606.45,648.01 L610.90,660.89 L615.36,671.46 L619.81,680.30 L624.26,687.80 L628.72,694.23 L633.17,699.82 L637.62,704.71 L642.07,709.03 L646.53,712.87 L650.98,716.31 L655.43,719.40 L659.88,722.20 L664.34,724.74 L668.79,727.06 L673.24,729.19 L677.70,731.14 L682.15,732.94 L686.60,734.61 L691.05,736.16 L695.51,737.60 L699.96,738.94 L704.41,740.19 L708.86,741.36 L713.32,742.46 L717.77,743.49 L722.22,744.47 L726.67,745.38 L731.13,746.25 L735.58,747.07 L740.03,747.84 L744.49,748.58 L748.94,749.27 L753.39,749.93 L757.84,750.57 L762.30,751.17 L766.75,751.74 L771.20,752.28 L775.65,752.80 L780.11,753.30 L784.56,753.78 L789.01,754.24 L793.47,754.67 L797.92,755.09 L802.37,755.49 L806.82,755.88 L811.28,756.25 L815.73,756.61 L820.18,756.95 L824.63,757.28 L829.09,757.60 L833.54,757.90 L837.99,758.20 L842.45,758.48 L846.90,758.76 L851.35,759.02 L855.80,759.28 L860.26,759.52 L864.71,759.76 L869.16,759.99 L873.61,760.22 L878.07,760.43 L882.52,760.64 L886.97,760.84 L891.43,761.04 L895.88,761.23 L900.33,761.41 L904.78,761.59 L909.24,761.76 L913.69,761.93 L918.14,762.09 L922.59,762.25 L927.05,762.41 L931.50,762.55 L935.95,762.70 L940.40,762.84 L944.86,762.98 L949.31,763.11 L953.76,763.24 L958.22,763.36 L962.67,763.48 L967.12,763.60 L971.57,763.72 L976.03,763.83 L980.48,763.94 L984.93,764.05 L989.38,764.15 L993.84,764.25 L998.29,764.35 L1002.74,764.45 L1007.20,764.54 L1011.65,764.63 L1016.10,764.72 L1020.55,764.80 L1025.01,764.89 L1029.46,764.97" fill="none" stroke="#1f77b4" stroke-width="1.72" stroke-linejoin="round" stroke-linecap="square"/>
<path d="M588.64,756.30 L593.09,756.66 L597.55,757.00 L602.00,757.33 L606.45,757.64 L610.90,757.95 L615.36,758.24 L619.81,758.52 L624.26,758.79 L628.72,759.06 L633.17,759.31 L637.62,759.56 L642.07,759.80 L646.53,760.03 L650.98,760.25 L655.43,760.46 L659.88,760.67 L664.34,760.87 L668.79,761.07 L673.24,761.26 L677.70,761.44 L682.15,761.62 L686.60,761.79 L691.05,761.96 L695.51,762.12 L699.96,762.27 L704.41,762.43 L708.86,762.58 L713.32,762.72 L717.77,762.86 L722.22,763.00 L726.67,763.13 L731.13,763.26 L735.58,763.38 L740.03,763.50 L744.49,763.62 L748.94,763.74 L753.39,763.85 L757.84,763.96 L762.30,764.06 L766.75,764.17 L771.20,764.27 L775.65,764.36 L780.11,764.46 L784.56,764.55 L789.01,764.64 L793.47,764.73 L797.92,764.82 L802.37,764.90 L806.82,764.98 L811.28,765.06 L815.73,765.14 L820.18,765.22 L824.63,765.29 L829.09,765.36 L833.54,765.43 L837.99,765.50 L842.45,765.57 L846.90,765.63 L851.35,765.70 L855.80,765.76 L860.26,765.82 L864.71,765.88 L869.16,765.94 L873.61,766.00 L878.07,766.05 L882.52,766.11 L886.97,766.16 L891.43,766.21 L895.88,766.26 L900.33,766.31 L904.78,766.36 L909.24,766.40 L913.69,766.45 L918.14,766.50 L922.59,766.54 L927.05,766.58 L931.50,766.62 L935.95,766.67 L940.40,766.71 L944.86,766.75 L949.31,766.78 L953.76,766.82 L958.22,766.86 L962.67,766.89 L967.12,766.93 L971.57,766.96 L976.03,767.00 L980.48,767.03 L984.93,767.06 L989.38,767.09 L993.84,767.13 L998.29,767.16 L1002.74,767.19 L1007.20,767.21 L1011.65,767.24 L1016.10,767.27 L1020.55,767.30 L1025.01,767.32 L1029.46,767.35" fill="none" stroke="#ff7f0e" stroke-width="1.72" stroke-linejoin="round" stroke-linecap="square"/>
<rect x="566.50" y="537.50" width="485.00" height="241.00" fill="none" stroke="#3c3c3c" stroke-width="1"/>
<line x1="623.50" y1="778.30" x2="623.50" y2="781.30" stroke="#3c3c3c" stroke-width="1"/>
<text x="623.44" y="790.60" font-size="9.40" text-anchor="middle" textLength="19.15" lengthAdjust="spacingAndGlyphs" fill="#1a1a1a">0.25</text>
<line x1="681.50" y1="778.30" x2="681.50" y2="781.30" stroke="#3c3c3c" stroke-width="1"/>
<text x="681.44" y="790.60" font-size="9.40" text-anchor="middle" textLength="19.15" lengthAdjust="spacingAndGlyphs" fill="#1a1a1a">0.50</text>
<line x1="739.50" y1="778.30" x2="739.50" y2="781.30" stroke="#3c3c3c" stroke-width="1"/>
<text x="739.45" y="790.60" font-size="9.40" text-anchor="middle" textLength="19.15" lengthAdjust="spacingAndGlyphs" fill="#1a1a1a">0.75</text>
<line x1="797.50" y1="778.30" x2="797.50" y2="781.30" stroke="#3c3c3c" stroke-width="1"/>
<text x="797.45" y="790.60" font-size="9.40" text-anchor="middle" textLength="19.15" lengthAdjust="spacingAndGlyphs" fill="#1a1a1a">1.00</text>
<line x1="855.50" y1="778.30" x2="855.50" y2="781.30" stroke="#3c3c3c" stroke-width="1"/>
<text x="855.45" y="790.60" font-size="9.40" text-anchor="middle" textLength="19.15" lengthAdjust="spacingAndGlyphs" fill="#1a1a1a">1.25</text>
<line x1="913.50" y1="778.30" x2="913.50" y2="781.30" stroke="#3c3c3c" stroke-width="1"/>
<text x="913.45" y="790.60" font-size="9.40" text-anchor="middle" textLength="19.15" lengthAdjust="spacingAndGlyphs" fill="#1a1a1a">1.50</text>
<line x1="971.50" y1="778.30" x2="971.50" y2="781.30" stroke="#3c3c3c" stroke-width="1"/>
<text x="971.46" y="790.60" font-size="9.40" text-anchor="middle" textLength="19.15" lengthAdjust="spacingAndGlyphs" fill="#1a1a1a">1.75</text>
<line x1="1029.50" y1="778.30" x2="1029.50" y2="781.30" stroke="#3c3c3c" stroke-width="1"/>
<text x="1029.46" y="790.60" font-size="9.40" text-anchor="middle" textLength="19.15" lengthAdjust="spacingAndGlyphs" fill="#1a1a1a">2.00</text>
<line x1="563.60" y1="745.50" x2="566.60" y2="745.50" stroke="#3c3c3c" stroke-width="1"/>
<text x="560.60" y="748.10" font-size="9.40" text-anchor="end" textLength="5.47" lengthAdjust="spacingAndGlyphs" fill="#1a1a1a">2</text>
<line x1="563.60" y1="698.50" x2="566.60" y2="698.50" stroke="#3c3c3c" stroke-width="1"/>
<text x="560.60" y="701.45" font-size="9.40" text-anchor="end" textLength="5.47" lengthAdjust="spacingAndGlyphs" fill="#1a1a1a">4</text>
<line x1="563.60" y1="652.50" x2="566.60" y2="652.50" stroke="#3c3c3c" stroke-width="1"/>
<text x="560.60" y="654.80" font-size="9.40" text-anchor="end" textLength="5.47" lengthAdjust="spacingAndGlyphs" fill="#1a1a1a">6</text>
<line x1="563.60" y1="605.50" x2="566.60" y2="605.50" stroke="#3c3c3c" stroke-width="1"/>
<text x="560.60" y="608.16" font-size="9.40" text-anchor="end" textLength="5.47" lengthAdjust="spacingAndGlyphs" fill="#1a1a1a">8</text>
<line x1="563.60" y1="558.50" x2="566.60" y2="558.50" stroke="#3c3c3c" stroke-width="1"/>
<text x="560.60" y="561.51" font-size="9.40" text-anchor="end" textLength="10.94" lengthAdjust="spacingAndGlyphs" fill="#1a1a1a">10</text>
<text x="809.05" y="532.10" font-size="10.32" text-anchor="middle" textLength="282.23" lengthAdjust="spacingAndGlyphs" fill="#1a1a1a">Transformation T für Vorwärts- und Rückwärtsprozesse</text>
<text x="809.05" y="803.30" font-size="8.60" text-anchor="middle" textLength="51.96" lengthAdjust="spacingAndGlyphs" fill="#1a1a1a">Parameter s</text>
<text x="543.20" y="657.85" font-size="8.60" text-anchor="middle" textLength="107.41" lengthAdjust="spacingAndGlyphs" fill="#1a1a1a" transform="rotate(-90 543.20 657.85)">Transformationswert T(s)</text>
<rect x="962.52" y="541.70" width="84.68" height="28.38" rx="1.7" fill="#fff" fill-opacity="0.8" stroke="#cccccc" stroke-width="0.75"/>
<line x1="965.96" y1="548.94" x2="983.16" y2="548.94" stroke="#1f77b4" stroke-width="1.72"/>
<text x="990.04" y="552.04" font-size="8.60" text-anchor="start" textLength="53.72" lengthAdjust="spacingAndGlyphs" fill="#1a1a1a">T_forward(s)</text>
<line x1="965.96" y1="561.84" x2="983.16" y2="561.84" stroke="#ff7f0e" stroke-width="1.72"/>
<text x="990.04" y="564.94" font-size="8.60" text-anchor="start" textLength="53.07" lengthAdjust="spacingAndGlyphs" fill="#1a1a1a">T_reverse(s)</text></svg>
<div class="abs" style="left:529px;top:820px;width:563px;height:1px;background:#6a6a6a"></div>

<div class="abs" style="left:1315px;top:156px;width:489px;height:677px;background:#1f1f1f"></div>
<div class="abs" style="left:1721px;top:156px;width:1px;height:677px;background:#4a4a4a"></div>
<div class="cl" style="left:1336.2px;top:164.00px"><span style="color:#72a85c"># Spiral-Darstellung</span></div>
<div class="cl" style="left:1336.2px;top:175.87px"><span style="color:#dcdcaa">plot_spirals</span><span style="color:#ffd700">(</span>phi<span style="color:#ffd700">)</span></div>
<div class="cl" style="left:1336.2px;top:199.60px"><span style="color:#72a85c"># --- Teil 2: Transformation &amp; Datenausgabe ---</span></div>
<div class="cl" style="left:1336.2px;top:223.34px"><span style="color:#72a85c"># Wir definieren diskrete Sequenzen:</span></div>
<div class="cl" style="left:1336.2px;top:235.20px"><span style="color:#72a85c"># Vorwärtsprozess: r_forward(n) = phi^n   (n &gt;= 0)</span></div>
<div class="cl" style="left:1336.2px;top:247.07px"><span style="color:#72a85c"># Rückwärtsprozess: r_reverse(n) = phi^(-n)</span></div>
<div class="cl" style="left:1336.2px;top:270.80px">N = <span style="color:#b5cea8">50</span>  <span style="color:#72a85c"># Anzahl der diskreten Schritte (n=0 bis N)</span></div>
<div class="cl" style="left:1336.2px;top:282.67px">n = np.<span style="color:#dcdcaa">arange</span><span style="color:#ffd700">(</span><span style="color:#b5cea8">0</span>, N+<span style="color:#b5cea8">1</span><span style="color:#ffd700">)</span></div>
<div class="cl" style="left:1336.2px;top:306.40px"><span style="color:#72a85c"># Berechnung der Sequenzen:</span></div>
<div class="cl" style="left:1336.2px;top:318.27px">r_forward = phi**n</div>
<div class="cl" style="left:1336.2px;top:330.14px">r_reverse = phi**<span style="color:#ffd700">(</span>-n<span style="color:#ffd700">)</span></div>
<div class="cl" style="left:1336.2px;top:353.87px"><span style="color:#72a85c"># Gewichtsfunktion: w(n) = phi^(-n)</span></div>
<div class="cl" style="left:1336.2px;top:365.74px">w = phi**<span style="color:#ffd700">(</span>-n<span style="color:#ffd700">)</span></div>
<div class="cl" style="left:1336.2px;top:389.47px"><span style="color:#72a85c"># Transformation Operator T:</span></div>
<div class="cl" style="left:1336.2px;top:401.34px"><span style="color:#72a85c"># Wir definieren T{f}(s) = Sum_{n=0}^{N} f(n) * w(n) * exp(-s*n)</span></div>
<div class="cl" style="left:1336.2px;top:413.21px"><span style="color:#72a85c"># Für den Vorwärtsprozess: f(n) = phi^n, also phi^n * phi^(-n) = 1  -&gt;</span></div>
<div class="cl" style="left:1336.2px;top:425.07px"><span style="color:#72a85c">#   T_forward(s) = Sum(exp(-s*n))</span></div>
<div class="cl" style="left:1336.2px;top:436.94px"><span style="color:#72a85c"># Für den Rückwärtsprozess: f(n) = phi^(-n), also phi^(-n) * phi^(-n) = phi^(-2n) -&gt;</span></div>
<div class="cl" style="left:1336.2px;top:448.81px"><span style="color:#72a85c">#   T_reverse(s) = Sum(phi^(-2n) * exp(-s*n))</span></div>
<div class="cl" style="left:1336.2px;top:472.54px"><span style="color:#72a85c"># Wähle einen s-Bereich (s kann als ein Frequenz-/Modulationsparameter interpretiert werden)</span></div>
<div class="cl" style="left:1336.2px;top:484.41px">s_values = np.<span style="color:#dcdcaa">linspace</span><span style="color:#ffd700">(</span><span style="color:#b5cea8">0.1</span>, <span style="color:#b5cea8">2</span>, <span style="color:#b5cea8">100</span><span style="color:#ffd700">)</span>  <span style="color:#72a85c"># Beispiel: 100 Werte zwischen 0.1 und 2</span></div>
<div class="cl" style="left:1336.2px;top:508.14px">T_forward = <span style="color:#ffd700">[]</span></div>
<div class="cl" style="left:1336.2px;top:520.01px">T_reverse = <span style="color:#ffd700">[]</span></div>
<div class="cl" style="left:1336.2px;top:543.74px"><span style="color:#c586c0">for</span> s <span style="color:#569cd6">in</span> s_values:</div>
<div class="cl" style="left:1336.2px;top:555.61px">    tf_val = np.<span style="color:#dcdcaa">sum</span><span style="color:#ffd700">(</span>np.<span style="color:#dcdcaa">exp</span><span style="color:#da70d6">(</span>-s * n<span style="color:#da70d6">)</span><span style="color:#ffd700">)</span>  <span style="color:#72a85c"># entspricht der geometrischen Reihe</span></div>
<div class="cl" style="left:1336.2px;top:567.48px">    tr_val = np.<span style="color:#dcdcaa">sum</span><span style="color:#ffd700">(</span><span style="color:#da70d6">(</span>phi**<span style="color:#179fff">(</span>-<span style="color:#b5cea8">2</span><span style="color:#179fff">)</span><span style="color:#da70d6">)</span>**n * np.<span style="color:#dcdcaa">exp</span><span style="color:#da70d6">(</span>-s * n<span style="color:#da70d6">)</span><span style="color:#ffd700">)</span>  <span style="color:#72a85c"># oder: np.sum(phi**(-2*n) * exp(-s*n))</span></div>
<div class="cl" style="left:1336.2px;top:579.35px">    T_forward.<span style="color:#dcdcaa">append</span><span style="color:#ffd700">(</span>tf_val<span style="color:#ffd700">)</span></div>
<div class="cl" style="left:1336.2px;top:591.21px">    T_reverse.<span style="color:#dcdcaa">append</span><span style="color:#ffd700">(</span>tr_val<span style="color:#ffd700">)</span></div>
<div class="cl" style="left:1336.2px;top:614.95px">T_forward = np.<span style="color:#dcdcaa">array</span><span style="color:#ffd700">(</span>T_forward<span style="color:#ffd700">)</span></div>
<div class="cl" style="left:1336.2px;top:626.81px">T_reverse = np.<span style="color:#dcdcaa">array</span><span style="color:#ffd700">(</span>T_reverse<span style="color:#ffd700">)</span></div>
<div class="cl" style="left:1336.2px;top:650.55px"><span style="color:#72a85c"># Ausgabe einiger Datenpunkte in der Konsole:</span></div>
<div class="cl" style="left:1336.2px;top:662.41px"><span style="color:#dcdcaa">print</span><span style="color:#ffd700">(</span><span style="color:#d6957a">"s \t T_forward \t T_reverse"</span><span style="color:#ffd700">)</span></div>
<div class="cl" style="left:1336.2px;top:674.28px"><span style="color:#c586c0">for</span> i <span style="color:#569cd6">in</span> <span style="color:#dcdcaa">range</span><span style="color:#ffd700">(</span><span style="color:#b5cea8">0</span>, <span style="color:#dcdcaa">len</span><span style="color:#da70d6">(</span>s_values<span style="color:#da70d6">)</span>, <span style="color:#b5cea8">10</span><span style="color:#ffd700">)</span>:</div>
<div class="cl" style="left:1336.2px;top:686.15px">    <span style="color:#dcdcaa">print</span><span style="color:#ffd700">(</span><span style="color:#569cd6">f</span><span style="color:#d6957a">"</span><span style="color:#da70d6">{</span>s_values<span style="color:#179fff">[</span>i<span style="color:#179fff">]</span>:.3f<span style="color:#da70d6">}</span><span style="color:#d6957a">\t </span><span style="color:#da70d6">{</span>T_forward<span style="color:#179fff">[</span>i<span style="color:#179fff">]</span>:.3f<span style="color:#da70d6">}</span><span style="color:#d6957a">\t\t </span><span style="color:#da70d6">{</span>T_reverse<span style="color:#179fff">[</span>i<span style="color:#179fff">]</span>:.3f<span style="color:#da70d6">}</span><span style="color:#d6957a">"</span><span style="color:#ffd700">)</span></div>
<div class="cl" style="left:1336.2px;top:709.88px"><span style="color:#72a85c"># Plot der Transformationsergebnisse:</span></div>
<div class="cl" style="left:1336.2px;top:721.75px">plt.<span style="color:#dcdcaa">figure</span><span style="color:#ffd700">(</span>figsize=<span style="color:#da70d6">(</span><span style="color:#b5cea8">10</span>, <span style="color:#b5cea8">5</span><span style="color:#da70d6">)</span><span style="color:#ffd700">)</span></div>
<div class="cl" style="left:1336.2px;top:733.62px">plt.<span style="color:#dcdcaa">plot</span><span style="color:#ffd700">(</span>s_values, T_forward, label=<span style="color:#d6957a">"T_forward(s)"</span>, linewidth=<span style="color:#b5cea8">2</span><span style="color:#ffd700">)</span></div>
<div class="cl" style="left:1336.2px;top:745.48px">plt.<span style="color:#dcdcaa">plot</span><span style="color:#ffd700">(</span>s_values, T_reverse, label=<span style="color:#d6957a">"T_reverse(s)"</span>, linewidth=<span style="color:#b5cea8">2</span><span style="color:#ffd700">)</span></div>
<div class="cl" style="left:1336.2px;top:757.35px">plt.<span style="color:#dcdcaa">xlabel</span><span style="color:#ffd700">(</span><span style="color:#d6957a">"Parameter s"</span><span style="color:#ffd700">)</span></div>
<div class="cl" style="left:1336.2px;top:769.22px">plt.<span style="color:#dcdcaa">ylabel</span><span style="color:#ffd700">(</span><span style="color:#d6957a">"Transformationswert T(s)"</span><span style="color:#ffd700">)</span></div>
<div class="cl" style="left:1336.2px;top:781.08px">plt.<span style="color:#dcdcaa">title</span><span style="color:#ffd700">(</span><span style="color:#d6957a">"Transformation T für Vorwärts- und Rückwärtsprozesse"</span><span style="color:#ffd700">)</span></div>
<div class="cl" style="left:1336.2px;top:792.95px">plt.<span style="color:#dcdcaa">legend</span><span style="color:#ffd700">()</span></div>
<div class="cl" style="left:1336.2px;top:804.82px">plt.<span style="color:#dcdcaa">grid</span><span style="color:#ffd700">(</span><span style="color:#569cd6">True</span><span style="color:#ffd700">)</span></div>
<div class="cl" style="left:1336.2px;top:816.69px">plt.<span style="color:#dcdcaa">show</span><span style="color:#ffd700">()</span></div>
</body></html>
